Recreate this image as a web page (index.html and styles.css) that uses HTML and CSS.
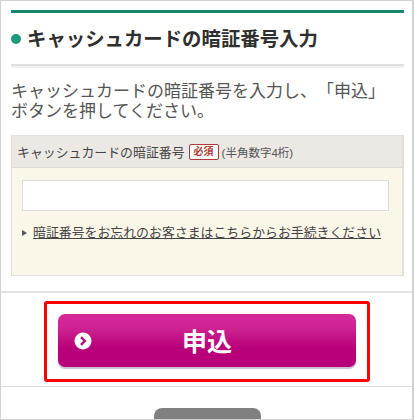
FILE: index.html
```html
<!DOCTYPE html>
<html lang="ja">

<head>
    <title>暗証番号入力</title>
    <link rel="stylesheet" href="styles.css">
</head>

<body>

    <section class="frame">

        <div class="intro">
            <h2 class="title"><span class="dot"></span>キャッシュカードの暗証番号入力</h2>
            <p class="lead">キャッシュカードの暗証番号を入力し、「申込」<br>ボタンを押してください。</p>

            <div class="panel">
                <div class="panel-head">
                    <span class="panel-label">キャッシュカードの暗証番号</span>
                    <span class="required">必須</span>
                    <span class="hint">(半角数字4桁)</span>
                </div>
                <div class="panel-body">
                    <input type="text" class="pin">
                    <div class="forgot">
                        <span class="arrow"></span>
                        <a href="#">暗証番号をお忘れのお客さまはこちらからお手続きください</a>
                    </div>
                </div>
            </div>
        </div>

        <div class="action">
            <div class="highlight">
                <button class="apply">
                    <svg class="apply-icon" viewBox="0 0 18 18" width="18" height="18">
                        <circle cx="9" cy="9" r="8.5" fill="#fff" />
                        <path d="M7 5.2 L10.8 9 L7 12.8" fill="none" stroke="#b0107e" stroke-width="2.4" />
                    </svg>
                    申込
                </button>
            </div>
        </div>

        <div class="bottom">
            <div class="back"></div>
        </div>

    </section>

</body>

</html>
```

FILE: styles.css
```css
* {
    box-sizing: border-box;
}

html,
body {
    height: 420px;
    overflow: hidden;
}

body {
    margin: 0;
    background-color: #fff;
    color: #444;
    font-family: "Liberation Sans", "Noto Sans CJK JP", sans-serif;
    text-spacing-trim: space-all;
}

.frame {
    height: 420px;
    border: solid #d2d2d2;
    border-width: 1px 2px 1px 1px;
    overflow: hidden;
}

.intro {
    padding: 9px 8px 0 10px;
    height: 290px;
}

.title {
    margin: 0;
    height: 56px;
    border-top: 3px solid #17866c;
    border-bottom: 2px solid #e0e0e0;
    box-shadow: 0 2px 0 #f2f2f2;
    color: #2f2f2f;
    font-size: 19.4px;
    font-weight: bold;
    line-height: 28px;
    white-space: nowrap;
    display: flex;
    align-items: center;
}

.dot {
    width: 10px;
    height: 10px;
    margin-right: 6px;
    border-radius: 50%;
    background-color: #1c9a7c;
}

.lead {
    margin: 16px 0 0;
    color: #555;
    font-size: 17px;
    line-height: 20px;
}

.panel {
    margin-top: 13px;
    height: 141px;
    border: 1px solid #e2e0da;
    border-right-width: 2px;
    background-color: #fbf7e8;
}

.panel-head {
    height: 32px;
    padding-left: 5px;
    border-bottom: 1px solid #dfdbd5;
    background-color: #ece8e4;
    display: flex;
    align-items: center;
    white-space: nowrap;
}

.panel-label {
    font-size: 12.9px;
}

.required {
    margin-left: 4px;
    padding: 0 4px;
    height: 16px;
    border: 1px solid #b03a3a;
    border-radius: 2px;
    background-color: #fff;
    color: #b03a3a;
    font-size: 10px;
    font-weight: bold;
    line-height: 14px;
}

.hint {
    margin-left: 3px;
    color: #555;
    font-size: 11.5px;
}

.panel-body {
    padding: 12px 13px 0 10px;
}

.pin {
    display: block;
    width: 100%;
    height: 31px;
    border: 1px solid #ddd;
    background-color: #fff;
}

.forgot {
    margin-top: 13px;
    display: flex;
    align-items: center;
    white-space: nowrap;
}

.arrow {
    margin-right: 6px;
    border-left: 5px solid #555;
    border-top: 3.5px solid transparent;
    border-bottom: 3.5px solid transparent;
}

.forgot a {
    color: #444;
    font-size: 12.9px;
    line-height: 18px;
}

.action {
    height: 96px;
    padding-top: 8px;
    border-top: 2px solid #e2e2e2;
    border-bottom: 1px solid #dcdcdc;
    display: flex;
    justify-content: center;
}

.highlight {
    width: 326px;
    height: 81px;
    margin-left: 1px;
    padding: 10px 11px;
    border: 3px solid #f00;
    border-radius: 3px;
}

.apply {
    position: relative;
    display: block;
    width: 100%;
    height: 53px;
    padding: 0 0 2px;
    border: none;
    border-radius: 7px;
    background-image: linear-gradient(#d42a98 0%, #cf2493 25%, #b8007a 65%, #b8007a 100%);
    box-shadow: 0 2px 1px #c9bfd0;
    color: #fff;
    font-family: inherit;
    font-size: 25px;
    font-weight: bold;
}

.apply-icon {
    position: absolute;
    left: 16px;
    top: 18px;
}

.bottom {
    padding-top: 21px;
    display: flex;
    justify-content: center;
}

.back {
    width: 107px;
    height: 30px;
    margin-left: 2px;
    border-radius: 8px 8px 0 0;
    background-color: #808080;
}
```
